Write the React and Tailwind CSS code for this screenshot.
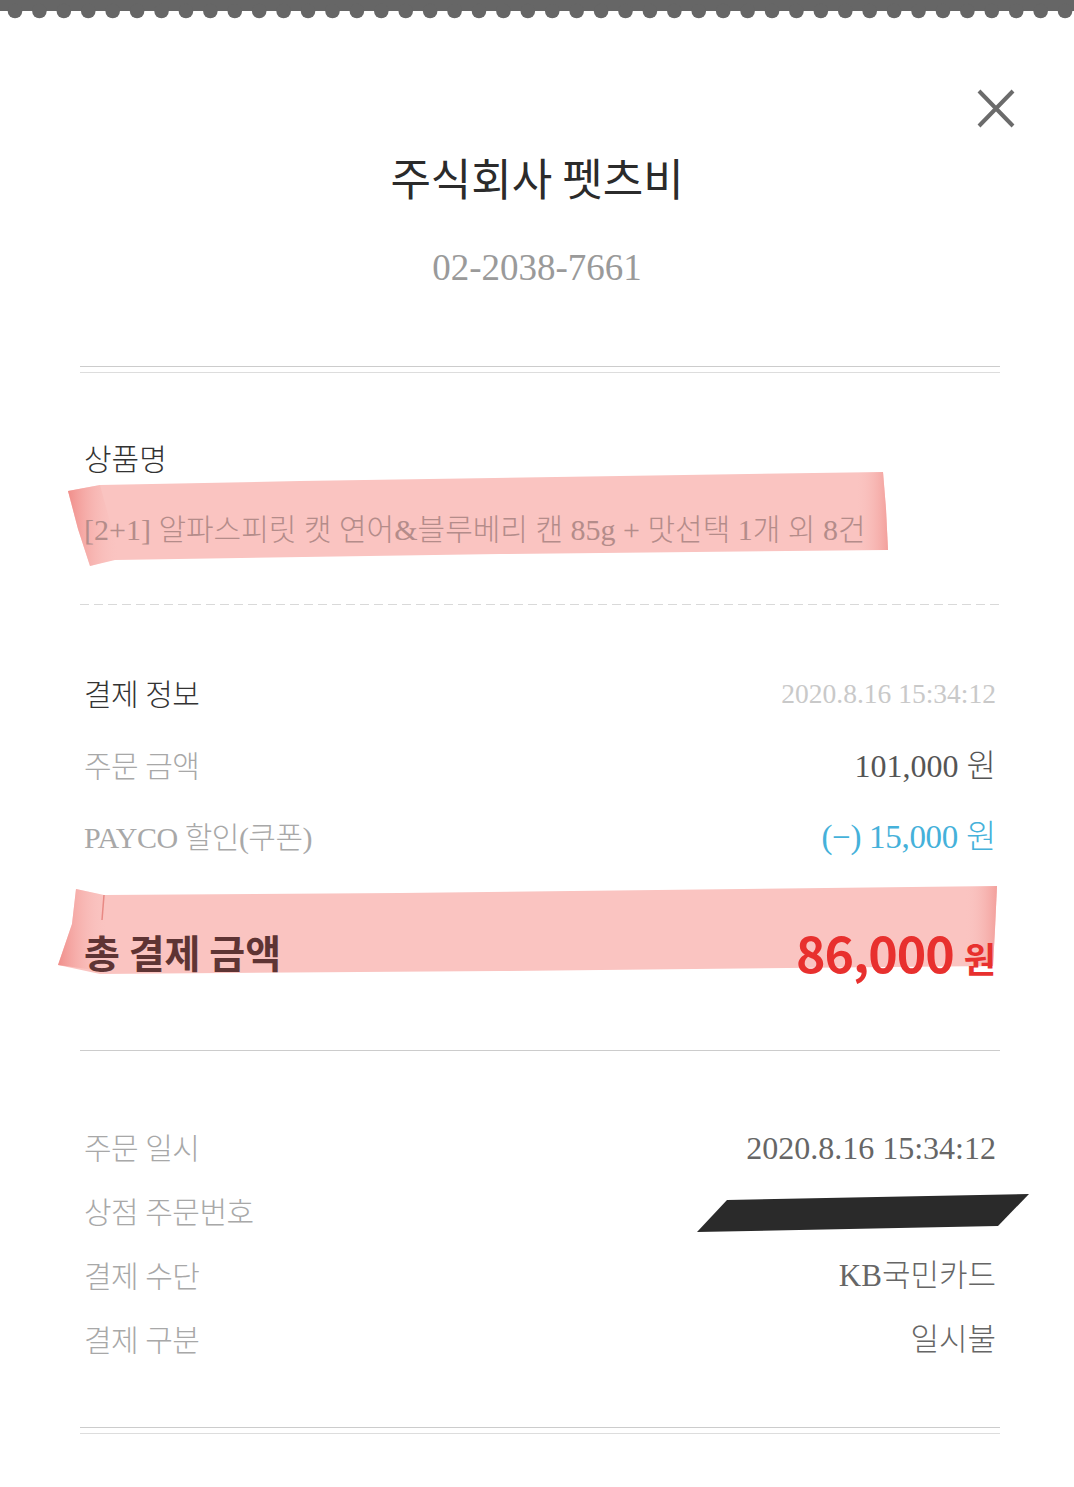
import React from "react";

const FONT = "font-['Liberation_Serif','Noto_Sans_CJK_KR',serif]";

function Scallops() {
  const circles = [];
  for (let i = 0; i < 46; i++) {
    circles.push(<circle key={i} cx={15 + i * 24.42} cy="11" r="7.3" fill="#666666" />);
  }
  return (
    <svg width="1074" height="19" className="block">
      <rect x="0" y="0" width="1074" height="11" fill="#666666" />
      {circles}
    </svg>
  );
}

function CloseIcon() {
  return (
    <svg width="40" height="40" viewBox="0 0 40 40" className="absolute top-[69px] right-[58px]">
      <path d="M3 3 L37 38 M37 3 L3 38" stroke="#6b6b6b" strokeWidth="4" fill="none" />
    </svg>
  );
}

function Row({ label, value, labelCls, valueCls, h = "h-[72px]", children }) {
  return (
    <div className={`relative flex items-center justify-between ${h} pl-[4px] pr-[4px]`}>
      <span className={labelCls}>{label}</span>
      <span className={valueCls}>{value}</span>
      {children}
    </div>
  );
}

const LABEL = "text-[30px] font-light text-[#a8a8a8] tracking-[-0.5px]";

export default function App() {
  return (
    <div className={`min-h-[1487px] w-[1074px] bg-white ${FONT} overflow-hidden`}>
      <Scallops />
      <div className="relative pt-[136px]">
        <CloseIcon />
        <div className="h-[44px] leading-[44px] text-center text-[44px] font-normal text-[#2b2b2b] font-['Noto_Sans_CJK_KR',sans-serif]">
          주식회사 펫츠비
        </div>
        <div className="mt-[50px] h-[37px] leading-[37px] text-center text-[37px] text-[#9a9a9a]">
          02-2038-7661
        </div>
      </div>

      <div className="pl-[80px] pr-[74px]">
        <div className="mt-[80px] h-px bg-[#cccccc]" />
        <div className="mt-[5px] h-px bg-[#dddddd]" />

        <div className="mt-[66px] h-[40px] flex items-center pl-[4px] text-[30px] font-light text-[#333333]">
          상품명
        </div>

        <div className="relative mt-[25px] h-[50px] flex items-center pl-[4px]">
          <svg width="1074" height="100" className="absolute left-[-80px] top-[-32px] pointer-events-none">
            <defs>
              <linearGradient id="lg1" x1="0" y1="0" x2="1" y2="0">
                <stop offset="0" stopColor="#f08e8a" />
                <stop offset="1" stopColor="#fac4c1" stopOpacity="0" />
              </linearGradient>
              <linearGradient id="rg1" x1="0" y1="0" x2="1" y2="0">
                <stop offset="0" stopColor="#fac4c1" stopOpacity="0" />
                <stop offset="1" stopColor="#f3a09c" />
              </linearGradient>
            </defs>
            <polygon
              points="68,19 100,13 300,9 883,0 886,37 888,78 500,82 115,88 90,94 78,57"
              fill="#fac4c1"
            />
            <polygon points="68,19 100,13 120,86 90,94 78,57" fill="url(#lg1)" />
            <polygon points="855,1 883,0 886,37 888,78 858,78" fill="url(#rg1)" />
          </svg>
          <span className="relative text-[30px] font-light text-[#b48c8a] whitespace-nowrap">
            [2+1] 알파스피릿 캣 연어&amp;블루베리 캔 85g + 맛선택 1개 외 8건
          </span>
        </div>

        <div className="mt-[50px] h-px bg-[linear-gradient(to_right,#d9d9d9_9px,transparent_9px)] bg-[length:14px_1px] bg-repeat-x" />

        <div className="mt-[53px]">
          <Row
            label="결제 정보"
            value="2020.8.16 15:34:12"
            labelCls="text-[30px] font-light text-[#333333] tracking-[-0.5px]"
            valueCls="text-[27.5px] text-[#c9c9c9]"
          />
          <Row
            label="주문 금액"
            value="101,000 원"
            labelCls={LABEL}
            valueCls="text-[32px] font-light text-[#555555]"
          />
          <Row
            h="h-[71px]"
            label="PAYCO 할인(쿠폰)"
            value="(−) 15,000 원"
            labelCls={LABEL}
            valueCls="text-[33px] font-light text-[#45b1da] tracking-[-0.3px]"
          />
        </div>

        <div className="relative mt-[48px] h-[60px] flex items-center justify-between pl-[4px] pr-[4px]">
          <svg width="1074" height="100" className="absolute left-[-80px] top-[-37px] pointer-events-none">
            <defs>
              <linearGradient id="lg2" x1="0" y1="0" x2="1" y2="0">
                <stop offset="0" stopColor="#f08e8a" />
                <stop offset="1" stopColor="#fac4c1" stopOpacity="0" />
              </linearGradient>
              <linearGradient id="rg2" x1="0" y1="0" x2="1" y2="0">
                <stop offset="0" stopColor="#fac4c1" stopOpacity="0" />
                <stop offset="1" stopColor="#f3a09c" />
              </linearGradient>
            </defs>
            <polygon
              points="76,5 104,11 400,9 997,2 995,45 993,82 500,87 100,90 58,81 72,40"
              fill="#fac4c1"
            />
            <polygon points="76,5 104,11 108,88 58,81 72,40" fill="url(#lg2)" />
            <polygon points="965,3 997,2 995,45 993,82 965,83" fill="url(#rg2)" />
            <path d="M104 11 L102 36" stroke="#e88984" strokeWidth="1.5" />
          </svg>
          <span className="relative text-[39px] font-bold text-[#5e3434] font-['Noto_Sans_CJK_KR',sans-serif]">
            총 결제 금액
          </span>
          <span className="relative flex items-baseline gap-[10px] text-[#e8302e] font-bold font-['Noto_Sans_CJK_KR',sans-serif]">
            <span className="text-[50px] tracking-[-1px]">86,000</span>
            <span className="text-[35px]">원</span>
          </span>
        </div>

        <div className="mt-[69px] h-px bg-[#cccccc]" />

        <div className="mt-[65px]">
          <Row
            h="h-[64px]"
            label="주문 일시"
            value="2020.8.16 15:34:12"
            labelCls={LABEL}
            valueCls="text-[32px] font-light text-[#666666]"
          />
          <Row
            h="h-[64px]"
            label="상점 주문번호"
            value=""
            labelCls={LABEL}
            valueCls=""
          >
            <svg width="340" height="50" className="absolute right-[-37px] top-[9px] pointer-events-none">
              <polygon points="30,11 332,5 301,37 0,43" fill="#2a2a2a" />
            </svg>
          </Row>
          <Row
            h="h-[64px]"
            label="결제 수단"
            value="KB국민카드"
            labelCls={LABEL}
            valueCls="text-[31px] font-light text-[#666666]"
          />
          <Row
            h="h-[64px]"
            label="결제 구분"
            value="일시불"
            labelCls={LABEL}
            valueCls="text-[31px] font-light text-[#666666]"
          />
        </div>

        <div className="mt-[55px] h-px bg-[#cccccc]" />
        <div className="mt-[5px] h-px bg-[#dddddd]" />
      </div>
    </div>
  );
}
